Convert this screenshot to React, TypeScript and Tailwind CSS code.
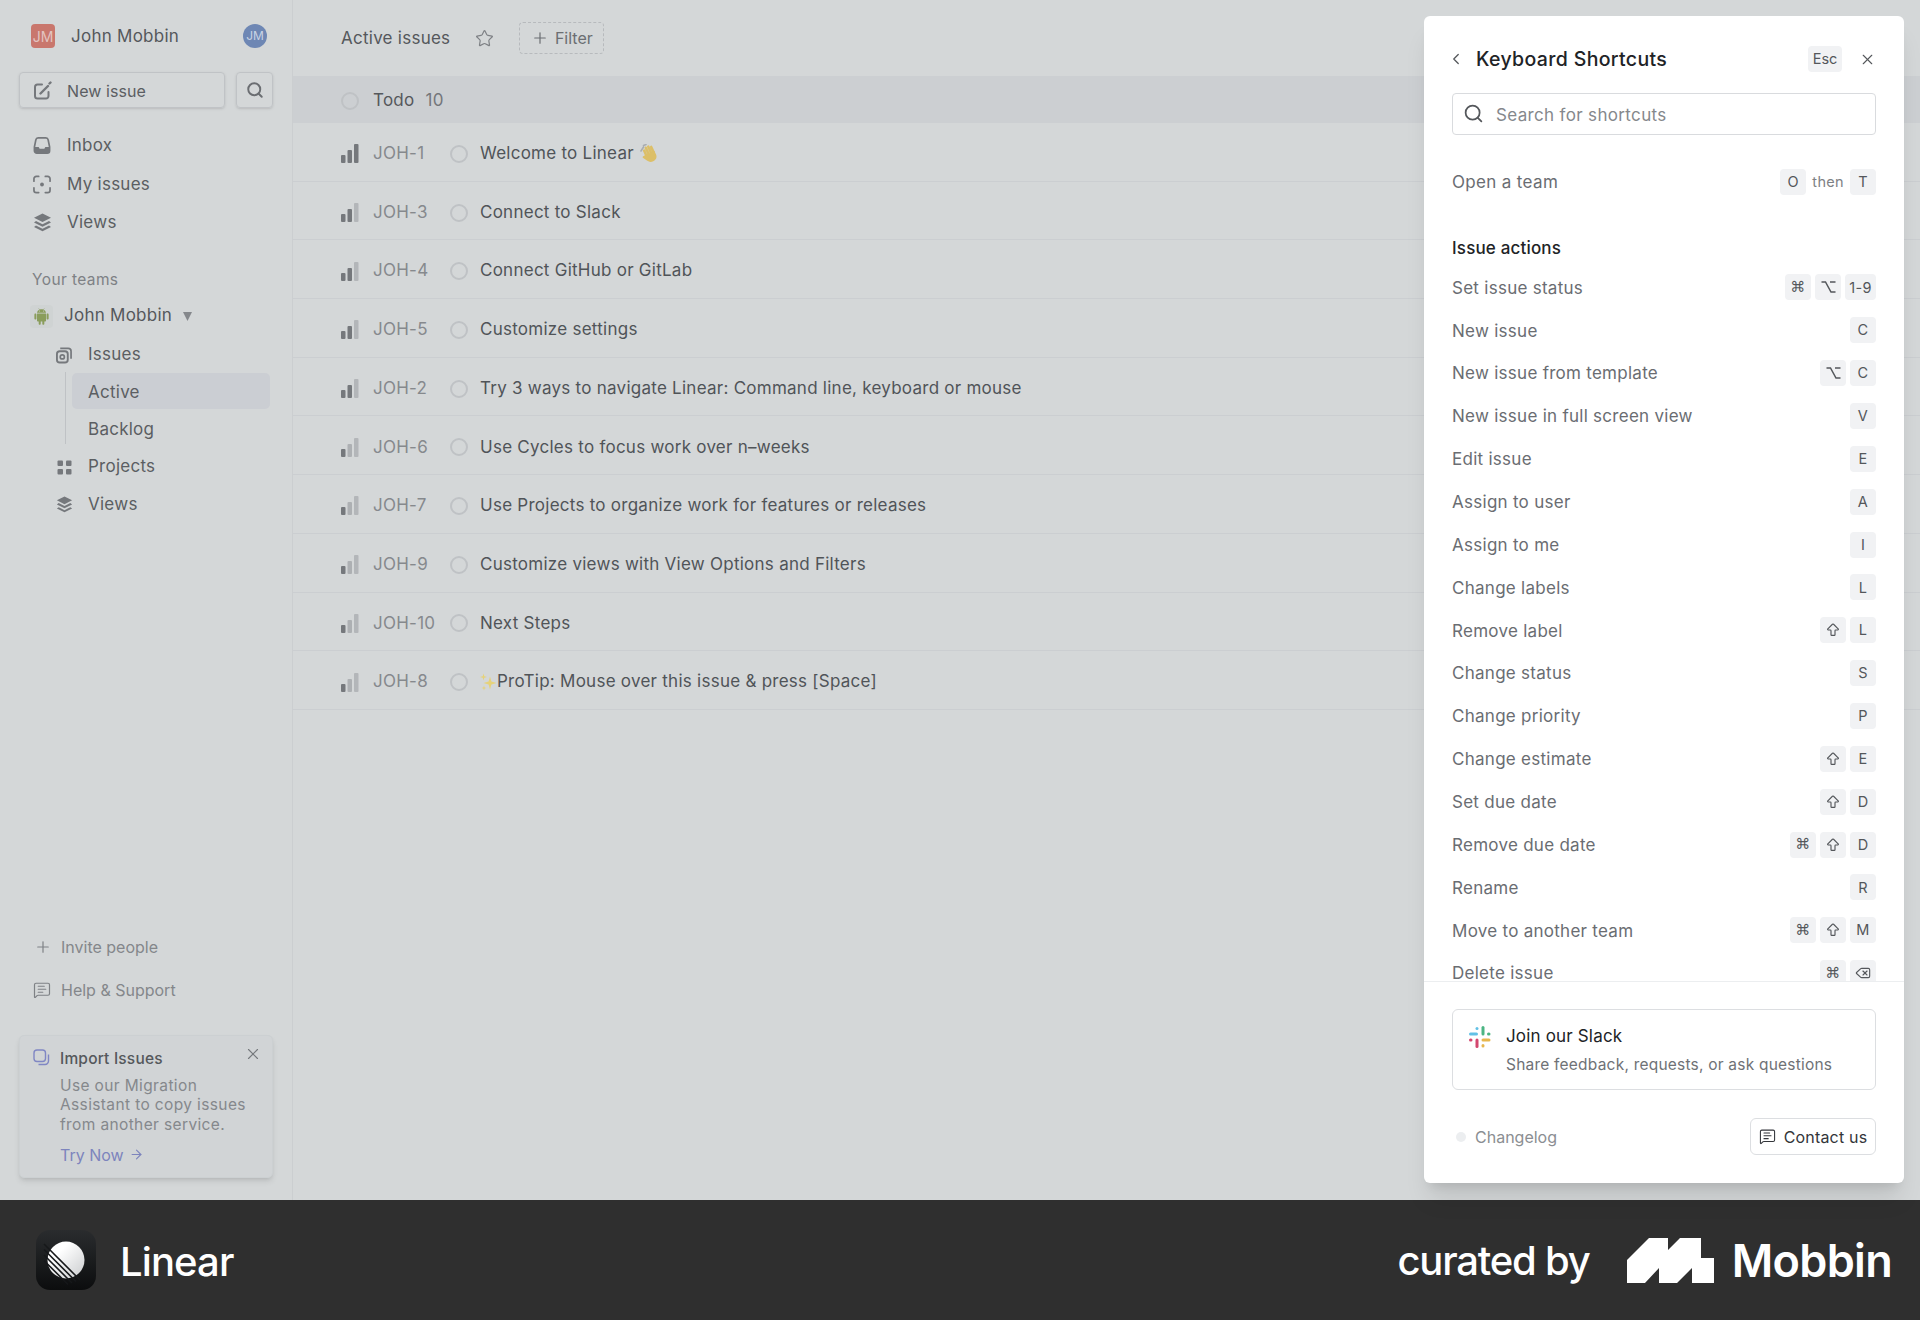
import React from 'react';
import { ArrowRight, ArrowBigUp, ChevronLeft, Delete, MessageSquareText, Plus, Search, Star, X } from 'lucide-react';
import { AiFillAndroid } from 'react-icons/ai';

const issues: { id: string; title: string; level: number; emoji?: 'wave' | 'spark' }[] = [
  { id: 'JOH-1', title: 'Welcome to Linear', level: 3, emoji: 'wave' },
  { id: 'JOH-3', title: 'Connect to Slack', level: 2 },
  { id: 'JOH-4', title: 'Connect GitHub or GitLab', level: 2 },
  { id: 'JOH-5', title: 'Customize settings', level: 2 },
  { id: 'JOH-2', title: 'Try 3 ways to navigate Linear: Command line, keyboard or mouse', level: 2 },
  { id: 'JOH-6', title: 'Use Cycles to focus work over n–weeks', level: 1 },
  { id: 'JOH-7', title: 'Use Projects to organize work for features or releases', level: 1 },
  { id: 'JOH-9', title: 'Customize views with View Options and Filters', level: 1 },
  { id: 'JOH-10', title: 'Next Steps', level: 1 },
  { id: 'JOH-8', title: 'ProTip: Mouse over this issue & press [Space]', level: 1, emoji: 'spark' },
];

const shortcuts: [string, string[]][] = [
  ['Set issue status', ['cmd', 'opt', '1-9']],
  ['New issue', ['C']],
  ['New issue from template', ['opt', 'C']],
  ['New issue in full screen view', ['V']],
  ['Edit issue', ['E']],
  ['Assign to user', ['A']],
  ['Assign to me', ['I']],
  ['Change labels', ['L']],
  ['Remove label', ['shift', 'L']],
  ['Change status', ['S']],
  ['Change priority', ['P']],
  ['Change estimate', ['shift', 'E']],
  ['Set due date', ['shift', 'D']],
  ['Remove due date', ['cmd', 'shift', 'D']],
  ['Rename', ['R']],
  ['Move to another team', ['cmd', 'shift', 'M']],
  ['Delete issue', ['cmd', 'del']],
];

const Priority = ({ level }: { level: number }) => (
  <svg width="18" height="19" viewBox="0 0 18 19" className="shrink-0">
    <rect x="0" y="11" width="4.5" height="8" rx="1" fill="#75787c" />
    <rect x="6.5" y="6" width="4.5" height="13" rx="1" fill={level >= 2 ? '#75787c' : '#adb0b3'} />
    <rect x="13" y="0" width="4.5" height="19" rx="1" fill={level >= 3 ? '#75787c' : '#b3b6b9'} />
  </svg>
);

const StatusCircle = () => <div className="w-[18px] h-[18px] rounded-full border-2 border-[#bfc2c5] shrink-0" />;

const Wave = () => (
  <svg width="20" height="19" viewBox="0 0 20 19" className="ml-[6px]">
    <path d="M1 7 L3.5 3 M3.5 1.5 L6 .5" stroke="#a9adb1" strokeWidth="1.6" strokeLinecap="round" />
    <g transform="rotate(-24 10 10)">
      <path d="M6 11 V4.5 M8.7 9 V2.5 M11.4 9 V2.5 M14 10 V4" stroke="#dcbf68" strokeWidth="2.5" strokeLinecap="round" />
      <path d="M4.6 9 H15.3 V13 C15.3 16 13 18 10 18 C7 18 5.5 16.5 4 14 L2 10.5 C1.7 9.5 3 8.6 3.8 9.4 Z" fill="#dcbf68" />
    </g>
  </svg>
);

const Spark = () => (
  <svg width="17" height="18" viewBox="0 0 17 18" className="shrink-0">
    <path d="M10 3.5 L11.4 8.6 L16.5 10 L11.4 11.4 L10 16.5 L8.6 11.4 L3.5 10 L8.6 8.6 Z" fill="#e6d27a" />
    <path d="M3.5 0.5 L4.3 3.2 L7 4 L4.3 4.8 L3.5 7.5 L2.7 4.8 L0 4 L2.7 3.2 Z" fill="#e6d27a" />
    <path d="M4 12.5 L4.6 14.4 L6.5 15 L4.6 15.6 L4 17.5 L3.4 15.6 L1.5 15 L3.4 14.4 Z" fill="#e6d27a" />
  </svg>
);

const Layers = ({ size = 19 }: { size?: number }) => (
  <svg width={size} height={size} viewBox="0 0 19 19" fill="#75787c" className="shrink-0">
    <path d="M9.5 .5 L18 4.8 L9.5 9.1 L1 4.8 Z" />
    <path d="M3 7.9 L9.5 11.2 L16 7.9 L18 9.4 L9.5 13.7 L1 9.4 Z" />
    <path d="M3 12.5 L9.5 15.8 L16 12.5 L18 14 L9.5 18.3 L1 14 Z" />
  </svg>
);

const NavRow = ({ icon, label }: { icon: React.ReactNode; label: string }) => (
  <div className="h-[38.5px] pt-[1px] flex items-center pl-[33px] gap-[16px] text-[17px] tracking-[0.015em] text-[#5b5e62]">
    <div className="w-[18px] flex justify-center">{icon}</div>
    {label}
  </div>
);

const SubRow = ({ icon, label }: { icon: React.ReactNode; label: string }) => (
  <div className="h-[37.3px] pt-[3px] flex items-center pl-[56px] gap-[16px] text-[17px] tracking-[0.015em] text-[#5b5e62]">
    <div className="w-[16px] flex justify-center">{icon}</div>
    {label}
  </div>
);

const Key = ({ k }: { k: string }) => {
  let inner: React.ReactNode = k;
  if (k === 'cmd') inner = <span className="font-['DejaVu_Sans',sans-serif] text-[15px]">⌘</span>;
  if (k === 'opt')
    inner = (
      <svg width="15" height="14" viewBox="0 0 15 14" fill="none" stroke="#54575b" strokeWidth="1.5">
        <path d="M.5 2 H4.5 L10 12 H14.5 M9 2 H14.5" />
      </svg>
    );
  if (k === 'shift') inner = <ArrowBigUp size={16} strokeWidth={1.7} />;
  if (k === 'del') inner = <Delete size={16} strokeWidth={1.7} />;
  return (
    <div className={`h-[26px] rounded-[4px] bg-[#f1f2f4] text-[#54575b] text-[14.5px] flex items-center justify-center ${k === '1-9' ? 'w-[31px]' : 'w-[26px]'}`}>
      {inner}
    </div>
  );
};

const Sidebar = () => (
  <aside className="w-[293px] shrink-0 h-full border-r border-[#cbced0] flex flex-col">
    <div className="flex items-center mt-[24px] h-[24px] pl-[31px] pr-[25px]">
      <div className="w-[24px] h-[24px] rounded-[4px] bg-[#c9776d] text-[#e3c4c0] text-[14px] flex items-center justify-center">JM</div>
      <span className="ml-[16px] pt-[2px] text-[17px] tracking-[0.015em] text-[#55585c]">John Mobbin</span>
      <div className="ml-auto w-[24px] h-[24px] rounded-full bg-[#6e87b4] text-[#c9d3e4] text-[12px] flex items-center justify-center">JM</div>
    </div>
    <div className="flex mt-[24px] pl-[19px] pr-[19px] gap-[11px]">
      <div className="flex-1 h-[36px] pt-[1px] border border-[#c0c3c6] rounded-[4px] shadow-sm flex items-center pl-[13px] gap-[14px] text-[16px] tracking-[0.005em] text-[#5b5e62]">
        <svg width="20" height="20" viewBox="0 0 20 20" fill="none" stroke="#75787c" strokeWidth="2" strokeLinecap="round" className="shrink-0">
          <path d="M9 3.5 H4.5 A2.5 2.5 0 0 0 2 6 V15 A2.5 2.5 0 0 0 4.5 17.5 H13 A2.5 2.5 0 0 0 15.5 15 V11" />
          <path d="M7.5 12.5 L15 5 M17.5 1.5 L16.5 2.5" strokeWidth="2.4" />
        </svg>
        New issue
      </div>
      <div className="w-[37px] h-[36px] border border-[#c0c3c6] rounded-[4px] shadow-sm flex items-center justify-center">
        <Search size={18} strokeWidth={2.6} color="#6b6e72" />
      </div>
    </div>
    <div className="mt-[18px]">
      <NavRow
        label="Inbox"
        icon={
          <svg width="19" height="19" viewBox="0 0 19 19" fill="none">
            <path d="M1.5 11 L3 3.5 A2.5 2.5 0 0 1 5.5 1.5 H13.5 A2.5 2.5 0 0 1 16 3.5 L17.5 11 V15 A2.5 2.5 0 0 1 15 17.5 H4 A2.5 2.5 0 0 1 1.5 15 Z" stroke="#75787c" strokeWidth="1.8" />
            <path d="M1.5 11 H6 L7 13 H12 L13 11 H17.5 V15 A2.5 2.5 0 0 1 15 17.5 H4 A2.5 2.5 0 0 1 1.5 15 Z" fill="#75787c" />
          </svg>
        }
      />
      <NavRow
        label="My issues"
        icon={
          <svg width="19" height="19" viewBox="0 0 19 19" fill="none" stroke="#75787c" strokeWidth="1.8" strokeLinecap="round">
            <path d="M1 6 V3.5 A2.5 2.5 0 0 1 3.5 1 H6 M13 1 H15.5 A2.5 2.5 0 0 1 18 3.5 V6 M18 13 V15.5 A2.5 2.5 0 0 1 15.5 18 H13 M6 18 H3.5 A2.5 2.5 0 0 1 1 15.5 V13" />
            <circle cx="9.5" cy="9.5" r="2" fill="#75787c" stroke="none" />
          </svg>
        }
      />
      <NavRow label="Views" icon={<Layers />} />
    </div>
    <div className="mt-[25.5px] h-[24px] pt-[1px] pl-[32px] flex items-center text-[15.5px] tracking-[0.025em] text-[#7e8185]">Your teams</div>
    <div className="mt-[6px] h-[36px] pt-[2px] flex items-center pl-[30px] text-[17px] tracking-[0.015em] text-[#55585c]">
      <div className="w-[23px] h-[23px] rounded-[4px] bg-[#cfd3d3] flex items-center justify-center">
        <AiFillAndroid size={19} color="#8a9d5c" />
      </div>
      <span className="ml-[11px]">John Mobbin</span>
      <svg width="9" height="9" viewBox="0 0 9 9" className="ml-[11px]"><path d="M0 0 H9 L4.5 9 Z" fill="#85888c" /></svg>
    </div>
    <div className="mt-[2px]">
      <SubRow
        label="Issues"
        icon={
          <svg width="17" height="18" viewBox="0 0 17 18" fill="none" stroke="#75787c" strokeWidth="1.8">
            <rect x="1" y="5" width="11.5" height="12" rx="3" strokeWidth="2" />
            <circle cx="6.7" cy="11" r="2.2" />
            <path d="M4.5 2 H13 A3 3 0 0 1 16 5 V13" />
          </svg>
        }
      />
      <div className="ml-[65px] pl-[7px] pr-[22px] relative">
        <div className="absolute left-0 top-0 bottom-[3px] w-px bg-[#bfc2c5]" />
        <div className="h-[37.3px] flex items-center">
          <div className="w-full h-[36px] pt-[3px] rounded-[5px] bg-[#cbced3] pl-[16px] flex items-center text-[17px] tracking-[0.015em] text-[#5b5e62]">Active</div>
        </div>
        <div className="h-[37.3px] pt-[3px] pl-[16px] flex items-center text-[17px] tracking-[0.015em] text-[#5b5e62]">Backlog</div>
      </div>
      <SubRow
        label="Projects"
        icon={
          <svg width="15" height="15" viewBox="0 0 15 15" fill="#75787c">
            <rect x="0.5" y="0.5" width="5.5" height="5.5" rx="1" />
            <rect x="9" y="0.5" width="5.5" height="5.5" rx="1" />
            <rect x="0.5" y="9" width="5.5" height="5.5" rx="1" />
            <rect x="9" y="9" width="5.5" height="5.5" rx="1" />
          </svg>
        }
      />
      <SubRow label="Views" icon={<Layers size={17} />} />
    </div>
    <div className="flex-1" />
    <div className="h-[44px] pt-[1px] flex items-center pl-[34px] gap-[9px] text-[16px] text-[#84878b]">
      <Plus size={18} strokeWidth={1.6} color="#7e8185" />
      Invite people
    </div>
    <div className="h-[44px] flex items-center pl-[33px] gap-[10px] text-[16px] text-[#84878b]">
      <MessageSquareText size={18} strokeWidth={1.6} color="#7e8185" />
      Help &amp; Support
    </div>
    <div className="mt-[23px] mb-[22px] mx-[19px] h-[143px] rounded-[5px] border border-[#ccd0d2] bg-[#d1d4d6] shadow-md relative pl-[40px] pt-[11px]">
      <svg width="17" height="17" viewBox="0 0 17 17" fill="none" stroke="#8087c4" strokeWidth="1.4" className="absolute left-[13px] top-[13px]">
        <rect x="1" y="1" width="11.5" height="11.5" rx="3" />
        <path d="M15.5 5.5 V12 A3.5 3.5 0 0 1 12 15.5 H5.5" />
      </svg>
      <X size={18} strokeWidth={1.5} color="#75787c" className="absolute right-[10px] top-[9px]" />
      <div className="text-[15.5px] leading-[24px] font-medium tracking-[0.012em] text-[#55585c]">Import Issues</div>
      <div className="mt-[5px] text-[15.5px] leading-[19.3px] tracking-[0.024em] text-[#85888c]">
        Use our Migration<br />Assistant to copy issues<br />from another service.
      </div>
      <div className="mt-[10px] text-[16px] leading-[22px] text-[#7d84bd] flex items-center gap-[5px]">
        Try Now <ArrowRight size={15} strokeWidth={1.8} />
      </div>
    </div>
  </aside>
);

const Main = () => (
  <main className="flex-1 h-full">
    <div className="h-[76px] pl-[48px] flex items-center gap-[25px]">
      <span className="pt-[2px] text-[17px] tracking-[0.015em] text-[#55585c]">Active issues</span>
      <Star size={19} strokeWidth={1.5} color="#7e8185" />
      <div className="w-[85px] h-[32px] rounded-[4px] border border-dashed border-[#b7babd] flex items-center justify-center gap-[6px] text-[16px] text-[#6b6e72]">
        <Plus size={18} strokeWidth={1.6} /> Filter
      </div>
    </div>
    <div className="h-[47px] pt-[2px] bg-[#cccfd2] pl-[48px] flex items-center text-[17px] tracking-[0.015em] text-[#55585c]">
      <StatusCircle />
      <span className="ml-[14px]">Todo</span>
      <span className="ml-[11px] text-[#74777b]">10</span>
    </div>
    {issues.map((it) => (
      <div key={it.id} className="h-[58.7px] pt-[4px] pl-[48px] border-b border-[#cbced1] flex items-center text-[17px] tracking-[0.015em]">
        <Priority level={it.level} />
        <span className="ml-[14px] w-[77px] text-[#86898d] shrink-0">{it.id}</span>
        <StatusCircle />
        <span className="ml-[12px] flex items-center text-[#505458]">
          {it.emoji === 'spark' && <Spark />}
          {it.title}
          {it.emoji === 'wave' && <Wave />}
        </span>
      </div>
    ))}
  </main>
);

const ShortcutsPanel = () => (
  <div className="absolute left-[1424px] top-[16px] w-[480px] h-[1167px] rounded-[6px] bg-white shadow-xl flex flex-col">
    <div className="mt-[30px] h-[26px] pl-[23px] pr-[28px] flex items-center">
      <ChevronLeft size={18} strokeWidth={1.7} color="#54575b" />
      <span className="ml-[11px] pt-[2px] text-[19.5px] font-medium text-[#212326] tracking-[0.018em]">Keyboard Shortcuts</span>
      <div className="ml-auto w-[34px] h-[26px] rounded-[4px] bg-[#f1f2f4] text-[14.5px] text-[#54575b] flex items-center justify-center">Esc</div>
      <X size={17} strokeWidth={1.6} color="#54575b" className="ml-[17px]" />
    </div>
    <div className="mt-[21px] mx-[28px] h-[42px] rounded-[4px] border border-[#d9dbde] flex items-center pl-[10px] gap-[12px] text-[17px] text-[#85888c] tracking-[0.02em] shrink-0">
      <Search size={21} strokeWidth={2} color="#54575b" className="-translate-y-px" />
      <span className="pt-[3px]">Search for shortcuts</span>
    </div>
    <div className="flex-1 min-h-0 overflow-hidden px-[28px] pt-[26px]">
      <div className="h-[43px] flex items-center justify-between text-[17px] text-[#6a6d72] tracking-[0.02em]">
        Open a team
        <div className="flex items-center -translate-y-px">
          <Key k="O" />
          <span className="mx-[6px] text-[14.5px] text-[#7e8185]">then</span>
          <Key k="T" />
        </div>
      </div>
      <div className="mt-[26px] h-[37px] pt-[1px] flex items-center text-[17px] font-medium text-[#212326] tracking-[0.01em]">Issue actions</div>
      {shortcuts.map(([label, keys]) => (
        <div key={label} className="h-[42.86px] flex items-center justify-between text-[17px] text-[#6a6d72] tracking-[0.016em]">
          {label}
          <div className="flex gap-[4px] -translate-y-px">
            {keys.map((k) => (
              <Key key={k} k={k} />
            ))}
          </div>
        </div>
      ))}
    </div>
    <div className="border-t border-[#eceef0] px-[28px] pt-[27px] pb-[28px] shrink-0">
      <div className="h-[81px] rounded-[6px] border border-[#dcdee1] pl-[53px] pt-[14px] relative">
        <svg width="22" height="22" viewBox="0 0 22 22" className="absolute left-[16px] top-[16px]">
          <rect x="0" y="6.5" width="9" height="3" rx="1.5" fill="#62c1e6" />
          <rect x="6.5" y="1" width="3" height="3" rx="1.5" fill="#62c1e6" />
          <rect x="12.5" y="0" width="3" height="9.5" rx="1.5" fill="#4cb583" />
          <rect x="18" y="6.5" width="3.5" height="3" rx="1.5" fill="#4cb583" />
          <rect x="0" y="12.5" width="3.5" height="3" rx="1.5" fill="#d4476f" />
          <rect x="6.5" y="12.5" width="3" height="9.5" rx="1.5" fill="#d4476f" />
          <rect x="12.5" y="12.5" width="9" height="3" rx="1.5" fill="#e7b74e" />
          <rect x="12.5" y="18" width="3" height="3.5" rx="1.5" fill="#e7b74e" />
        </svg>
        <div className="text-[17px] leading-[24px] text-[#212326] tracking-[0.01em]">Join our Slack</div>
        <div className="mt-[6px] text-[15.5px] leading-[22px] text-[#6f7276] tracking-[0.014em]">Share feedback, requests, or ask questions</div>
      </div>
      <div className="mt-[28px] h-[37px] flex items-center justify-between">
        <div className="flex items-center pl-[4px] gap-[9px] text-[16px] text-[#8b8e92]">
          <div className="w-[10px] h-[10px] rounded-full bg-[#eceef0]" />
          Changelog
        </div>
        <div className="w-[126px] h-[37px] rounded-[6px] border border-[#dcdee1] flex items-center justify-center gap-[8px] text-[16px] text-[#33353a] tracking-[0.012em]">
          <MessageSquareText size={17} strokeWidth={1.5} />
          Contact us
        </div>
      </div>
    </div>
  </div>
);

const Footer = () => (
  <footer className="h-[120px] bg-[#2f2f2f] flex items-center justify-between pl-[36px] pr-[28px] text-white">
    <div className="flex items-center gap-[24px]">
      <svg width="60" height="60" viewBox="0 0 60 60">
        <defs>
          <linearGradient id="tile" x1="0" y1="0" x2="0" y2="1">
            <stop offset="0" stopColor="#2a2c2e" />
            <stop offset="1" stopColor="#0c0d0e" />
          </linearGradient>
          <linearGradient id="disc" x1="0" y1="0" x2="1" y2="1">
            <stop offset="0.3" stopColor="#ffffff" />
            <stop offset="1" stopColor="#c9cbcd" />
          </linearGradient>
        </defs>
        <rect width="60" height="60" rx="14" fill="url(#tile)" />
        <circle cx="30" cy="30" r="18.5" fill="url(#disc)" />
        <g stroke="#16181a" strokeWidth="1.6">
          <path d="M8 25 L36 53" />
          <path d="M8 30.5 L32 54.5" />
          <path d="M8 19.5 L40 51.5" />
          <path d="M8 14 L44 50" />
        </g>
      </svg>
      <span className="pt-[4px] text-[40px] font-medium tracking-[-0.022em] leading-none">Linear</span>
    </div>
    <div className="flex items-center">
      <span className="pt-[2px] text-[40px] font-medium tracking-[-0.03em] leading-none">curated by</span>
      <svg width="87" height="45" viewBox="0 0 87 45" fill="#fff" className="ml-[37px]">
        <path d="M0 22 L22 0 H41 V12 L53 0 H74 V20 H87 V45 H65 V30 L50 45 H32 V30 L18 45 H0 Z" />
      </svg>
      <span className="ml-[18px] text-[45px] font-semibold tracking-[-0.015em] leading-none">Mobbin</span>
    </div>
  </footer>
);

export default function App() {
  return (
    <div className="w-[1920px] h-[1320px] font-['Inter',sans-serif] flex flex-col overflow-hidden">
      <div className="h-[1200px] relative flex bg-[#d4d7d8]">
        <Sidebar />
        <Main />
        <ShortcutsPanel />
      </div>
      <Footer />
    </div>
  );
}
